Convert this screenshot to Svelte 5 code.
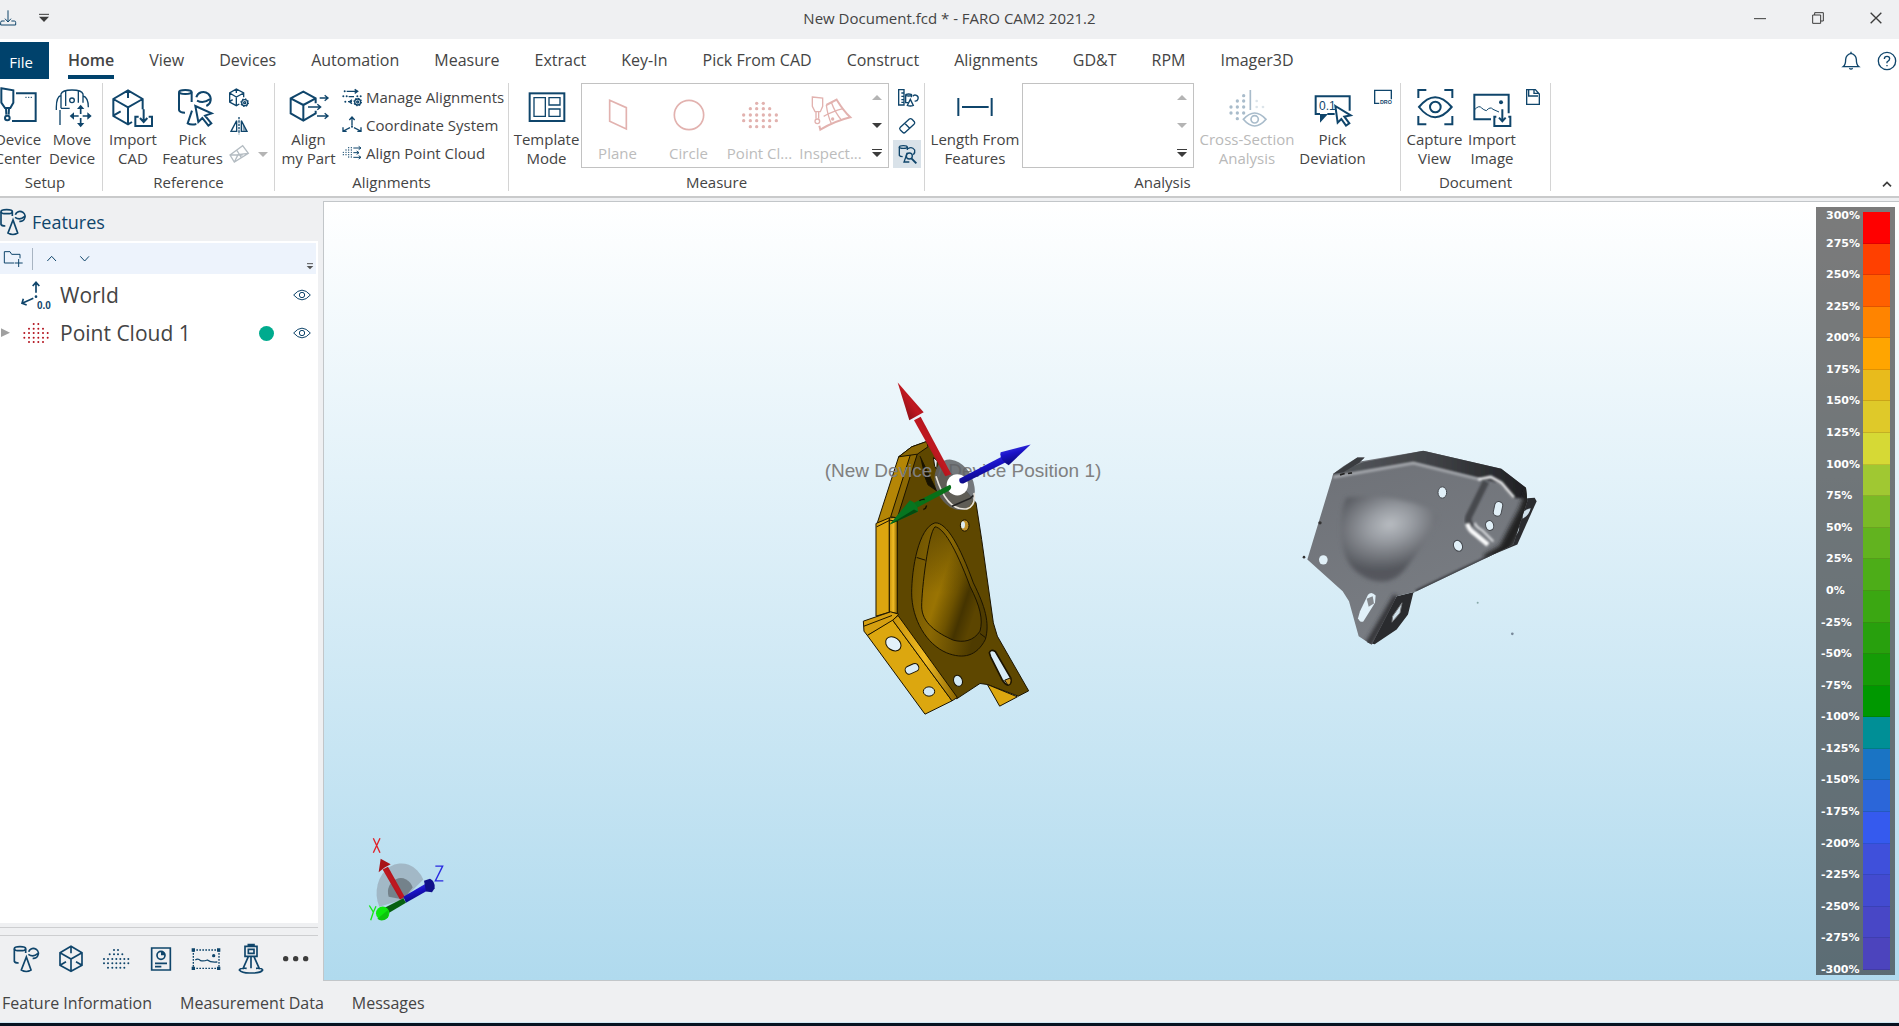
<script>
  const dots = (r, rows) =>
    rows
      .map(([y, xs]) => xs.map((x) => `<circle cx="${x}" cy="${y}" r="${r}" fill="currentColor" stroke="none"/>`).join(''))
      .join('');
  const p = (d, extra = '') => `<path d="${d}" ${extra}/>`;
  const solid = 'fill="currentColor" stroke="none"';
  const gear = (x, y) =>
    `<circle cx="${x}" cy="${y}" r="9"/><circle cx="${x}" cy="${y}" r="11" stroke-width="4" stroke-dasharray="4 4.6"/><circle cx="${x}" cy="${y}" r="3"/>`;
  const shapes = (extra = '') =>
    '<ellipse cx="20" cy="47" rx="17" ry="6"/>' +
    p('M3 47V85Q5 90 16 90M37 47V60M46 56A15 15 0 1 1 58 76M45 64Q60 74 73 62M39 72L24 111Q39 120 53 111Z') + extra;

  // Each icon: [viewBox in thirds of a pixel, stroke width, markup]
  const icons = {
    download: ['0 30 51 54', 3, p('M14 66H6Q2 66 2 70V78H47V70Q47 66 43 66H34M24 34V69M15 59L24 69L33 59')],
    customize: ['114 42 36 30', 3, p('M117 46H147') + p('M117 53H147L132 69Z', solid)],
    minimize: ['1119 33 42 36', 3, p('M1122 53H1158')],
    restore: ['1293 30 42 42', 3, p('M1298 42H1322V67H1298ZM1304 42V35H1330V60H1322')],
    close: ['1467 30 42 42', 4, p('M1472 35L1504 67M1504 35L1472 67')],
    bell: ['1380 150 66 66', 4, p('M1390 200Q1397 195 1397 178Q1398 164 1413 160Q1428 164 1429 178Q1429 195 1436 200ZM1413 160V155M1408 205Q1413 210 1418 205')],
    help: ['1488 150 66 66', 4, '<circle cx="1521" cy="183" r="26"/>' + p('M1513 177Q1513 169 1521 169Q1529 169 1529 176Q1529 181 1521 186V190M1521 195V199')],
    collapse: ['1500 537 42 30', 5, p('M1509 559L1521 547L1533 559')],
    device: ['-4 261 120 120', 6, p('M6 265L42 271V308L33 324H17L6 308ZM20 324L21 344M29 324L28 344M50 280H109V363H38') + '<circle cx="24" cy="354" r="7"/>' + p('M78 292h4m4 0h4m4 0h4', 'stroke-width="3"')],
    move: ['153 261 120 120', 4, p('M180 325V282Q184 270 213 270Q242 270 246 282V308M180 325H206M180 286Q166 290 166 322V330M177 330V375M194 273V318M232 273V308M246 288Q262 292 262 322') + '<circle cx="213" cy="301" r="7"/>' + p('M239 325V371M216 348H262', 'stroke-width="5" stroke-dasharray="17 12"') + p('M239 314L228 327H250ZM239 382L228 369H250ZM206 348L219 337V359ZM272 348L259 337V359Z', solid)],
    importCad: ['335 261 120 120', 6, p('M392 366L380 373L336 348V297L380 271L424 297V328M336 297L380 322L424 297M380 322V372M380 271V294M336 347L358 334M412 350H402V378H452V350H442M427 328V365M416 354L427 366L438 354')],
    pickFeatures: ['512 261 120 120', 6, '<ellipse cx="549" cy="276" rx="19" ry="6"/>' + p('M530 277V330Q532 338 548 338M568 277V306M582 292A22 22 0 1 1 612 318M584 302Q604 312 622 298M569 332L556 370Q566 376 582 372M579 318L628 340L608 347L627 370L618 377L600 354L588 366Z')],
    cadGear: ['681 264 60 60', 4, p('M712 312L703 317L683 306V279L703 267L725 279V292M683 279L703 291L725 279M703 291V315M703 267V279M683 305L692 299') + gear(728, 308)],
    mirror: ['681 350 60 60', 4, p('M711 353V405', 'stroke-dasharray="7 3"') + p('M704 364V396H687ZM718 364V396H735Z') + p('M722 372V394H732Z', 'fill="currentColor" fill-opacity=".5" stroke="none"')],
    meshPlane: ['681 432 60 60', 4, p('M684 465L722 437L739 460L697 486ZM684 465L722 465M704 450L718 473M697 486L708 464L739 460')],
    alignPart: ['861 261 120 120', 6, p('M941 332V340L904 362L866 340V295L904 275L941 295V310M866 295L904 315L941 295M904 315V362') + p('M953 294H978M968 286L978 294L968 302M918 321H956M946 313L956 321L946 329M945 348H978M968 340L978 348L968 356', 'stroke-width="4"')],
    manage: ['1020 264 60 60', 4, p('M1034 277H1066M1058 271L1067 277L1058 283M1040 293H1056M1038 308H1050M1050 302L1042 308L1050 314') + dots(3, [[277, [1028]], [292, [1024, 1034, 1066, 1076]], [308, [1030]]]) + gear(1067, 309)],
    coordinate: ['1020 348 60 60', 4, p('M1050 356V380M1042 363L1050 354L1058 363M1044 386L1024 396M1023 385V397H1034M1056 386L1076 396M1077 385V397H1066') + dots(3, [[383, [1050]]])],
    alignCloud: ['1020 435 60 60', 3, dots(2, [[449, [1040, 1048]], [456, [1032, 1040, 1048]], [463, [1024, 1032, 1040, 1048]], [470, [1024, 1032, 1040, 1048]], [477, [1040, 1048]]]) + p('M1054 450H1076M1070 445L1077 450L1070 455M1054 464H1070M1064 459L1071 464L1064 469M1054 478H1076M1070 473L1077 478L1070 483')],
    template: ['72 261 120 120', 6, '<rect x="80" y="280" width="104" height="83"/>' + p('M93 293H127V349H93ZM138 293H171V315H138ZM138 327H171V349H138Z', 'stroke-width="4"')],
    plane: ['288 282 120 120', 5, p('M323 298L373 320V384L323 361Z')],
    circle: ['501 282 120 120', 5, '<circle cx="561" cy="342" r="44"/>'],
    cloud: ['717 282 120 120', 5, dots(5, [[307, [767, 787]], [323, [748, 767, 787, 806]], [342, [728, 748, 767, 787, 806, 826]], [359, [728, 748, 767, 787, 806, 826]], [377, [748, 767, 787, 806]]])],
    inspect: ['928 282 120 120', 4, p('M932 288L963 291V316L956 332H940L932 316ZM943 332V353M951 332V353') + '<circle cx="947" cy="361" r="7"/>' + p('M974 312L1005 296Q1026 330 1046 349Q1000 360 956 386L953 374', 'stroke-width="6"') + p('M989 304Q1000 335 1020 358M1024 323Q990 332 966 346M974 312Q978 345 990 370') + dots(5, [[354, [993]]])],
    ruler: ['1185 264 60 60', 4, p('M1190 269H1206V315H1190ZM1198 279H1206M1198 289H1206M1198 299H1206M1198 307H1206M1211 286V308H1218M1228 286V292M1232 289A9 9 0 1 1 1238 303M1225 298L1216 316Q1225 320 1234 316Z') + '<ellipse cx="1220" cy="285" rx="9" ry="3"/>'],
    eraser: ['1185 350 60 60', 4, p('M1195 384L1222 359Q1226 356 1230 360L1237 367Q1240 371 1236 375L1210 399Q1206 403 1202 399L1195 392Q1191 388 1195 384ZM1208 372L1223 387')],
    featureSearch: ['1185 432 60 60', 4, '<ellipse cx="1204" cy="441" rx="12" ry="4"/>' + p('M1192 441V466Q1194 470 1202 470M1216 441V450M1218 446Q1230 438 1238 450Q1240 458 1234 464M1216 458L1206 486H1222') + '<circle cx="1222" cy="468" r="9"/>' + p('M1229 476L1243 490', 'stroke-width="6"')],
    length: ['99 261 120 120', 6, p('M109 294V348M209 294V348M120 321H200')],
    cross: ['915 261 120 120', 5, dots(5, [[287, [965]], [303, [946, 965]], [321, [927, 946, 965]], [339, [927, 946, 965]], [356, [946]]]) + '<g opacity=".4">' + dots(4, [[303, [1004]], [321, [1004, 1023]]]) + '</g>' + p('M985 270V330M964 358Q998 320 1032 358Q998 398 964 358Z') + '<circle cx="998" cy="358" r="11"/>'],
    deviation: ['1171 261 120 120', 6, p('M1236 342H1214M1192 342H1179V289H1281V332') + p('M1192 342H1216L1192 368Z', solid) + '<text x="1189" y="331" class="ic-num">0.1</text>' + p('M1238 318L1284 346L1265 350L1280 370L1270 377L1256 357L1245 368Z', 'fill="#fff"')],
    dro: ['1353 264 60 60', 4, p('M1372 310H1358V271H1408V298') + '<text x="1374" y="313" class="ic-dro">DRO</text>'],
    capture: ['98 261 120 120', 6, p('M108 294V270H132M186 270H210V294M210 348V373H186M132 373H108V348M110 321Q158 262 208 321Q158 382 110 321Z') + '<circle cx="159" cy="321" r="16"/>'],
    image: ['269 261 120 120', 6, p('M326 358H276V284H379V340M342 350H336V378H384V350H378M360 328V362M350 353L360 364L370 353') + p('M277 329Q290 314 298 324Q304 330 312 332Q324 318 332 328L350 336', 'stroke-width="3"') + dots(6, [[307, [356]]])],
    save: ['423 264 60 60', 4, p('M434 269H460L472 282V313H434ZM440 269V288H468M456 269V280H470')],
    features: ['0 36 78 84', 5, shapes()],
    folder: ['9 165 63 54', 3, p('M42 204H13V170H30L35 178H60V190M56 192V216M44 204H68')],
    up: ['135 174 42 30', 3, p('M142 195L155 181L168 195')],
    down: ['234 174 42 30', 3, p('M241 181L254 195L267 181')],
    overflow: ['918 201 24 24', 3, p('M921 206H939') + p('M920 213H940L930 223Z', solid)],
    world: ['60 258 96 90', 5, p('M108 266V296M98 276L108 265L118 276M100 313L68 327M70 314L66 328L80 333') + dots(4, [[308, [108]]]) + '<text x="111" y="345" class="ic-world">0.0</text>'],
    cloudRed: ['66 384 84 66', 4, dots(3, [[390, [101, 115]], [404, [87, 101, 115, 129]], [417, [73, 87, 101, 115, 129, 143]], [431, [73, 87, 101, 115, 129, 143]], [444, [87, 101, 115, 129]]])],
    eye: ['879 279 54 42', 3, p('M881 300Q906 271 931 300Q906 329 881 300Z') + '<circle cx="906" cy="300" r="8"/>'],
    expand: ['0 400 33 36', 3, p('M3 404V430L30 417Z', solid)],
    tabFeatures: ['-4 33 84 90', 5, shapes()],
    tabCad: ['171 132 84 90', 5, p('M213 139L180 158V196L213 214L246 196V158ZM180 158L213 177L246 158M213 177V214M213 139V160M180 196L198 185M246 196L228 185')],
    tabCloud: ['306 132 84 90', 5, dots(3, [[150, [342, 354]], [163, [329, 342, 354, 367]], [177, [312, 324, 337, 349, 361, 373, 385]], [190, [312, 324, 337, 349, 361, 373, 385]], [203, [324, 337, 349, 361, 373]]])],
    tabReport: ['441 132 84 90', 5, p('M455 144H511V210H455ZM465 190H501M465 200H484') + '<circle cx="483" cy="166" r="12"/>' + p('M483 166V154A12 12 0 0 1 495 166Z', solid)],
    tabImage: ['576 132 84 90', 4, p('M580 150H657M580 205H657', 'stroke-dasharray="5 4"') + p('M580 150V205M657 150V205', 'stroke-dasharray="5 4"') + p('M575 145h10v10h-10ZM651 145h10v10h-10ZM575 200h10v10h-10ZM651 200h10v10h-10Z', solid) + p('M586 180Q594 174 602 182Q612 184 622 180Q632 188 652 186') + dots(5, [[167, [641]]])],
    tabScanner: ['711 132 84 90', 5, p('M735 139H771V169H735ZM745 139V134H762V139M745 148H762V160H745ZM745 170L728 208M762 170L779 208M753 170V205M740 205Q720 204 718 210Q726 220 753 219Q782 220 788 210Q786 204 768 205')],
    tabMore: ['843 156 90 42', 5, dots(8, [[176, [857, 887, 917]]])],
  };

  const tabs = ['View', 'Devices', 'Automation', 'Measure', 'Extract', 'Key-In', 'Pick From CAD', 'Construct', 'Alignments', 'GD&T', 'RPM', 'Imager3D'];
  const gallery = [['plane', 'Plane'], ['circle', 'Circle'], ['cloud', 'Point Cl...'], ['inspect', 'Inspect...']];
  const alignList = [['manage', 'Manage Alignments'], ['coordinate', 'Coordinate System'], ['alignCloud', 'Align Point Cloud']];
  const panelTabs = [['tabFeatures', 'Features'], ['tabCad', 'CAD'], ['tabCloud', 'Point clouds'], ['tabReport', 'Reports'], ['tabImage', 'Images'], ['tabScanner', 'Devices'], ['tabMore', 'More']];
  const colors = ['#ff0000', '#ff4000', '#ff6000', '#ff8400', '#ffa500', '#e8bb1c', '#dfc929', '#d6d935', '#a0c832', '#7aba26', '#62b31f', '#4dad18', '#3ba712', '#28a00d', '#159c06', '#009800', '#008f96', '#1a74c4', '#2b66d9', '#355aee', '#3f50db', '#434bd0', '#4847c6', '#4c44bd'];
  const scale = colors.map((color, i) => ({ color, value: 300 - i * 25 }));
</script>

{#snippet icon(name)}
  {@const [box, stroke, body] = icons[name]}
  {@const size = box.split(' ').map(Number)}
  <svg class="ic" viewBox={box} width={size[2] / 3} height={size[3] / 3} stroke-width={stroke} aria-hidden="true">{@html body}</svg>
{/snippet}

{#snippet big(name, line1, line2, cls)}
  <button class="big {cls}" disabled={name === 'cross'}>
    {@render icon(name)}
    <span>{line1}<br />{line2}</span>
  </button>
{/snippet}

{#snippet small(name, label, active = false)}
  <button class="small" class:active aria-label={label}>{@render icon(name)}</button>
{/snippet}

{#snippet spinner(dim)}
  <div class="spinner">
    <button class="dim" aria-label="Scroll up"><svg viewBox="0 0 10 5" width="10" height="5"><path d="M0 5L5 0L10 5Z" /></svg></button>
    <button class:dim aria-label="Scroll down"><svg viewBox="0 0 10 5" width="10" height="5"><path d="M0 0L5 5L10 0Z" /></svg></button>
    <button aria-label="Show all"><svg viewBox="0 0 10 8" width="10" height="8"><path d="M0 0H10V1H0ZM0 3L5 8L10 3Z" /></svg></button>
  </div>
{/snippet}

<div class="app">
  <header class="titlebar">
    <div class="quick">
      <button aria-label="Save">{@render icon('download')}</button>
      <button class="dark" aria-label="Customize toolbar">{@render icon('customize')}</button>
    </div>
    <h1>New Document.fcd * - FARO CAM2 2021.2</h1>
    <div class="window">
      <button aria-label="Minimize">{@render icon('minimize')}</button>
      <button aria-label="Restore">{@render icon('restore')}</button>
      <button aria-label="Close">{@render icon('close')}</button>
    </div>
  </header>

  <nav class="tabs">
    <button class="file">File</button>
    <button class="tab current">Home</button>
    {#each tabs as tab}<button class="tab">{tab}</button>{/each}
    <div class="tools">
      <button aria-label="Notifications">{@render icon('bell')}</button>
      <button aria-label="Help">{@render icon('help')}</button>
    </div>
  </nav>

  <div class="ribbon">
    <section class="group first">
      <div class="items">
        {@render big('device', 'Device', 'Center', 'w53')}
        {@render big('move', 'Move', 'Device', 'w53')}
      </div>
      <h2>Setup</h2>
    </section>
    <section class="group">
      <div class="items">
        {@render big('importCad', 'Import', 'CAD', 'w53')}
        {@render big('pickFeatures', 'Pick', 'Features', 'w65')}
        <div class="stack wide">
          {@render small('cadGear', 'CAD settings')}
          {@render small('mirror', 'Mirror')}
          <button class="small split" aria-label="Mesh plane">
            {@render icon('meshPlane')}
            <svg viewBox="0 0 10 5" width="10" height="5"><path d="M0 0L5 5L10 0Z" fill="currentColor" /></svg>
          </button>
        </div>
      </div>
      <h2>Reference</h2>
    </section>
    <section class="group">
      <div class="items">
        {@render big('alignPart', 'Align', 'my Part', 'w61')}
        <div class="list">
          {#each alignList as [name, label]}
            <button>{@render icon(name)}<span>{label}</span></button>
          {/each}
        </div>
      </div>
      <h2>Alignments</h2>
    </section>
    <section class="group">
      <div class="items">
        {@render big('template', 'Template', 'Mode', 'w68')}
        <div class="gallery">
          {#each gallery as [name, label]}
            <button class="choice" disabled>{@render icon(name)}<span>{label}</span></button>
          {/each}
          {@render spinner(false)}
        </div>
        <div class="stack">
          {@render small('ruler', 'Measure features')}
          {@render small('eraser', 'Erase')}
          {@render small('featureSearch', 'Find features', true)}
        </div>
      </div>
      <h2>Measure</h2>
    </section>
    <section class="group">
      <div class="items">
        {@render big('length', 'Length From', 'Features', 'w94')}
        <div class="gallery empty">{@render spinner(true)}</div>
        {@render big('cross', 'Cross-Section', 'Analysis', 'w98')}
        {@render big('deviation', 'Pick', 'Deviation', 'w73')}
        <div class="stack">{@render small('dro', 'Digital readout')}</div>
      </div>
      <h2>Analysis</h2>
    </section>
    <section class="group">
      <div class="items">
        {@render big('capture', 'Capture', 'View', 'w61')}
        {@render big('image', 'Import', 'Image', 'w53')}
        <div class="stack">{@render small('save', 'Save report')}</div>
      </div>
      <h2>Document</h2>
    </section>
    <button class="collapse" aria-label="Collapse ribbon">{@render icon('collapse')}</button>
  </div>

  <main>
    <aside>
      <div class="panel-title">{@render icon('features')}<h2>Features</h2></div>
      <div class="panel-tools">
        <button aria-label="New folder">{@render icon('folder')}</button>
        <i></i>
        <button aria-label="Move up">{@render icon('up')}</button>
        <button aria-label="Move down">{@render icon('down')}</button>
        <button class="more" aria-label="Options">{@render icon('overflow')}</button>
      </div>
      <ul class="tree">
        <li>
          <span class="toggle"></span>
          <span class="glyph">{@render icon('world')}</span>
          <span class="name">World</span>
          <button aria-label="Toggle World">{@render icon('eye')}</button>
        </li>
        <li>
          <button class="toggle" aria-label="Expand">{@render icon('expand')}</button>
          <span class="glyph red">{@render icon('cloudRed')}</span>
          <span class="name">Point Cloud 1</span>
          <span class="status"></span>
          <button aria-label="Toggle Point Cloud 1">{@render icon('eye')}</button>
        </li>
      </ul>
      <div class="grip"></div>
      <div class="panel-tabs">
        {#each panelTabs as [name, label]}
          <button class:dark={name === 'tabMore'} aria-label={label}>{@render icon(name)}</button>
        {/each}
      </div>
    </aside>

    <div class="viewport">
      <svg class="scene" viewBox="324 203 1575 777" role="img" aria-label="3D scene">
        <defs>
          <linearGradient id="bowl" gradientUnits="userSpaceOnUse" x1="365" y1="640" x2="545" y2="700">
            <stop offset="0" stop-color="#8a6703" /><stop offset=".35" stop-color="#9a7403" /><stop offset=".62" stop-color="#6d5200" /><stop offset=".8" stop-color="#453400" /><stop offset="1" stop-color="#5c4500" />
          </linearGradient>
          <linearGradient id="rim" x1="0" y1="0" x2="1" y2=".4">
            <stop offset="0" stop-color="#6a5000" /><stop offset=".5" stop-color="#8a6804" /><stop offset="1" stop-color="#4e3b00" />
          </linearGradient>
          <linearGradient id="lip" gradientUnits="userSpaceOnUse" x1="0" y1="400" x2="0" y2="700">
            <stop offset="0" stop-color="#5a4500" /><stop offset="1" stop-color="#5a4500" stop-opacity="0" />
          </linearGradient>
          <linearGradient id="bar" x1="0" x2="1"><stop offset="0" stop-color="#c8930a" /><stop offset=".5" stop-color="#f0bb24" /><stop offset="1" stop-color="#8a6400" /></linearGradient>
          <linearGradient id="redArrow" x1="0" y1="1" x2="1" y2="0"><stop offset="0" stop-color="#6d0c10" /><stop offset=".5" stop-color="#c01820" /><stop offset="1" stop-color="#7d0c12" /></linearGradient>
          <linearGradient id="blueArrow" x1="0" y1="0" x2=".4" y2="1"><stop offset="0" stop-color="#4a4af0" /><stop offset=".5" stop-color="#1a12c8" /><stop offset="1" stop-color="#080870" /></linearGradient>
          <linearGradient id="steel" x1="0" y1="0" x2=".4" y2="1"><stop offset="0" stop-color="#6e7177" /><stop offset="1" stop-color="#797d83" /></linearGradient>
          <linearGradient id="edge" x1="0" x2="1"><stop offset="0" stop-color="#55585d" /><stop offset=".5" stop-color="#404246" /><stop offset="1" stop-color="#1c1d20" /></linearGradient>
          <radialGradient id="dome" gradientUnits="userSpaceOnUse" cx="330" cy="285" r="190" gradientTransform="rotate(-15 330 285) translate(0 85) scale(1 .7)">
            <stop offset="0" stop-color="#b8bcc1" /><stop offset=".35" stop-color="#999da3" /><stop offset=".7" stop-color="#74777d" /><stop offset="1" stop-color="#54575d" />
          </radialGradient>
          <filter id="soft" x="-20%" y="-20%" width="140%" height="140%"><feGaussianBlur stdDeviation="7" /></filter>
          <filter id="soft2" x="-20%" y="-20%" width="140%" height="140%"><feGaussianBlur stdDeviation="3" /></filter>
          <clipPath id="plate"><path d="M160 133L250 98L430 64L664 118L738 175L742 215L700 345L640 375L408 486L350 500L275 646L236 620L207 515L188 485L82 390Z" /></clipPath>
        </defs>

        <g transform="translate(800 360) scale(.33333)" stroke="#1a1300" stroke-width="3" stroke-linejoin="round">
          <path d="M296 292L335 262L380 246L410 290L528 430L545 540L580 790L592 830L686 994L655 1010L562 975L540 972L470 1018L290 790L290 480Z" fill="#5e4700" />
          <path d="M296 292L335 275L352 282L275 478L232 490Z" fill="#b58606" />
          <path d="M332 283L352 283L292 475L272 472Z" fill="#8c6802" />
          <path d="M296 292L335 262L380 246L384 262L352 284Z" fill="#8a6805" />
          <path d="M228 492L268 475V758L228 770Z" fill="#dba50f" />
          <path d="M268 475L292 474V762L268 758Z" fill="url(#bar)" />
          <path d="M190 785L272 757L296 764L272 790L202 828L192 815Z" fill="#d59f10" />
          <path d="M202 828L278 782L456 1024L375 1064Z" fill="#dca70f" />
          <path d="M278 782L294 768L472 1014L456 1024Z" fill="url(#bar)" />
          <path d="M192 800L276 768M230 502L270 482L292 486" fill="none" />
          <path d="M562 975L652 1012L599 1040Z" fill="#dca70f" />
          <g transform="rotate(35 280 853)"><ellipse cx="280" cy="853" rx="25" ry="19" fill="#e3f1f9" /></g>
          <rect x="315" y="916" width="42" height="24" rx="11" transform="rotate(-24 336 928)" fill="#d8ecf7" />
          <ellipse cx="387" cy="996" rx="17" ry="14" fill="#d2e9f5" />
          <ellipse cx="474" cy="964" rx="13" ry="17" transform="rotate(-20 474 964)" fill="#d2e9f5" />
          <ellipse cx="494" cy="498" rx="13" ry="17" fill="#c0922c" />
          <ellipse cx="489" cy="496" rx="6" ry="11" fill="#dcebf4" stroke="none" />
          <path d="M568 880Q572 868 586 876L632 955Q636 975 624 977Q614 974 606 960L572 892Z" fill="#d8ecf7" stroke-width="5" />
          <path d="M614 962L632 955Q636 975 624 977Z" fill="#c4952a" />
          <path d="M405 490C440 488 480 560 520 670C555 740 570 790 556 840C530 890 490 900 440 880C380 855 335 780 335 700C335 630 355 505 405 490Z" fill="url(#rim)" />
          <path d="M405 502C430 505 465 560 510 680C540 740 550 780 540 815C520 845 490 850 460 842C410 820 365 790 365 740C365 690 385 520 405 502Z" fill="url(#bowl)" stroke="none" />
          <path d="M405 502C430 505 465 560 510 680C540 740 550 780 540 815C520 845 490 850 460 842C410 820 365 790 365 740C365 690 385 520 405 502Z" fill="url(#lip)" />
          <path d="M350 594L376 602M540 822L556 834" fill="none" />
          <path d="M400 294L412 304L410 330L404 320Z" fill="#e6eef2" />
          <path d="M360 290L410 394L384 376L372 345" fill="#171200" />
        </g>

        <text x="963" y="477" text-anchor="middle" class="position">(New Device / Device Position 1)</text>

        <g transform="translate(800 360) scale(.33333)">
          <ellipse cx="464" cy="376" rx="56" ry="79" transform="rotate(-24 464 376)" fill="#5f6165" fill-opacity=".85" />
          <path d="M408 350Q440 455 500 448Q528 440 522 400" fill="none" stroke="#e8e4dc" stroke-width="5" />
          <path d="M456 440L512 416L520 408" fill="none" stroke="#222" stroke-width="5" />
          <circle cx="472" cy="376" r="32" fill="#fff" />
          <path d="M342 182L362 172L454 344L436 350Z" fill="url(#redArrow)" />
          <path d="M293 69L371 158L328 182Z" fill="url(#redArrow)" />
          <path d="M478 358L612 288L622 306L490 372Q476 374 478 358Z" fill="url(#blueArrow)" />
          <path d="M692 255L602 278Q596 300 626 317Z" fill="url(#blueArrow)" />
          <path d="M450 376Q458 384 448 393L352 444L342 430Z" fill="#087018" />
          <path d="M268 496L330 422Q354 432 354 456Z" fill="#077520" />
          <path d="M268 496L342 450L354 456Z" fill="#034a10" />
          <path d="M358 424Q366 418 374 420M370 450Q378 448 380 438" fill="none" stroke="#161200" stroke-width="4" />
        </g>

        <g transform="translate(1280 430) scale(.33333)">
          <path d="M640 375L742 206L764 205L770 215L712 345Z" fill="#2b2c2f" />
          <path d="M728 262Q726 240 752 236Q748 256 728 268ZM692 322Q696 298 718 294Q716 318 692 328Z" fill="#cfe0ea" />
          <path d="M408 486L400 490L384 555L350 600L284 644L262 640L350 500Z" fill="#2a2b2e" />
          <path d="M338 560L366 520L360 550L336 578Z" fill="#cfe0ea" stroke="#77797c" stroke-width="3" />
          <path d="M160 133L190 110L232 84L254 84L240 96L430 64L664 118L738 175L742 215L700 345L640 375L408 486L350 500L275 646L236 620L207 515L188 485L82 390Z" fill="url(#steel)" />
          <g clip-path="url(#plate)">
            <path d="M150 140L400 98L610 150L660 160L700 205L770 210L720 110L430 50L150 110Z" fill="url(#edge)" filter="url(#soft2)" />
            <path d="M200 205Q330 190 440 235Q480 250 470 275Q430 350 370 425Q330 470 270 450Q190 420 184 320Q180 240 200 205Z" fill="url(#dome)" filter="url(#soft)" />
            <path d="M160 143L400 101L600 150" fill="none" stroke="#a5a8ad" stroke-width="8" filter="url(#soft2)" />
            <path d="M595 150L632 142L664 160L702 204" fill="none" stroke="#f2f3f5" stroke-width="8" filter="url(#soft2)" />
            <path d="M618 156L566 262Q560 280 576 292" fill="none" stroke="#46494e" stroke-width="20" filter="url(#soft2)" />
            <path d="M562 282Q566 300 584 312L624 346" fill="none" stroke="#fafbfc" stroke-width="14" filter="url(#soft2)" />
            <path d="M584 280Q590 294 606 302L640 336" fill="none" stroke="#e4e6e9" stroke-width="6" filter="url(#soft2)" />
            <path d="M756 180L736 240L672 362L620 392" fill="none" stroke="#202124" stroke-width="36" filter="url(#soft)" />
            <path d="M350 500L262 650" fill="none" stroke="#303236" stroke-width="20" filter="url(#soft)" />
            <path d="M640 376L408 486" fill="none" stroke="#3b3d42" stroke-width="10" filter="url(#soft2)" />
          </g>
          <path d="M160 133L232 84L254 84L238 100L190 128Z" fill="#3a3c40" />
          <g fill="#e1f0f8" stroke="#44474c" stroke-width="3">
            <ellipse cx="487" cy="189" rx="13" ry="17" /><ellipse cx="534" cy="349" rx="13" ry="17" transform="rotate(-25 534 349)" />
            <ellipse cx="629" cy="288" rx="12" ry="15" transform="rotate(-15 629 288)" /><ellipse cx="130" cy="391" rx="13" ry="14" stroke="none" />
            <rect x="642" y="216" width="24" height="44" rx="11" transform="rotate(12 654 238)" />
            <path d="M264 496Q274 484 287 498L285 520L250 576Q240 580 234 566L240 545Z" stroke="none" />
          </g>
          <path d="M260 508L278 500L282 522L266 532Z" fill="#85898e" />
          <circle cx="72" cy="383" r="4" fill="#333" /><circle cx="120" cy="280" r="5" fill="#333" /><path d="M180 136l14-4m10 0l12-2" stroke="#222" stroke-width="5" />
          <circle cx="593" cy="520" r="3" fill="#8aa" /><circle cx="697" cy="613" r="4" fill="#789" />
        </g>

        <g transform="translate(340 810) scale(.33333)">
          <path d="M190 270L118 292A70 84 0 1 1 250 210Z" fill="#9aabb8" fill-opacity=".75" />
          <path d="M190 270L146 262A38 42 0 0 1 218 234Z" fill="#6c7880" fill-opacity=".85" />
          <path d="M128 180L144 172L194 262L180 270Z" fill="url(#redArrow)" />
          <path d="M122 148L152 164L134 174L116 188Z" fill="#a81418" />
          <path d="M190 262L258 222L268 240L198 280Z" fill="url(#blueArrow)" />
          <path d="M252 214L270 208Q286 216 284 236L276 248L258 246Z" fill="#10108a" />
          <path d="M190 266L128 298L140 314L198 280Z" fill="#066010" />
          <circle cx="128" cy="311" r="20" fill="#0ee80e" /><path d="M112 328Q126 340 144 324L146 300Z" fill="#0cc40c" />
          <g fill="none" stroke-width="4"><path d="M100 86L120 130M120 86L100 130" stroke="#e02028" /><path d="M286 170H308L286 214H310" stroke="#2828e0" /><path d="M88 288L100 308L108 290M100 308L92 332" stroke="#18e818" /></g>
        </g>
      </svg>

      <ol class="legend">
        {#each scale as step}
          <li><span class:neg={step.value < 0}>{step.value}%</span><b style:background={step.color}></b></li>
        {/each}
        <li class="end"><span class="neg">-300%</span></li>
      </ol>
    </div>
  </main>

  <footer>
    <button>Feature Information</button>
    <button>Measurement Data</button>
    <button>Messages</button>
  </footer>
</div>

<style>
  :global(body) { margin: 0; }
  .app {
    display: flex;
    flex-direction: column;
    height: 100vh;
    box-sizing: border-box;
    overflow: hidden;
    border-bottom: 3px solid #061220;
    background: #eff0f2;
    color: #444;
    font: 15px/19px "Open Sans", "Noto Sans", sans-serif;
  }
  button { padding: 0; border: 0; background: none; color: inherit; font: inherit; white-space: nowrap; }
  h1, h2, ul, ol { margin: 0; padding: 0; font: inherit; list-style: none; }
  .ic { display: block; flex: none; overflow: visible; fill: none; stroke: currentColor; color: #0f456b; }
  .dark .ic, .window .ic, .collapse .ic { color: #3c3c3c; }
  .ic :global(text) { fill: currentColor; stroke: none; font-family: "Liberation Sans", sans-serif; font-weight: bold; }
  .ic :global(.ic-num) { font-size: 36px; font-weight: normal; }
  .ic :global(.ic-dro) { font-size: 16px; }
  .ic :global(.ic-world) { font-size: 30px; }

  .titlebar { display: grid; grid-template-columns: 1fr auto 1fr; align-items: center; height: 39px; padding-bottom: 3px; box-sizing: border-box; flex: none; }
  .quick { display: flex; align-items: center; gap: 21px; }
  .titlebar h1 { font-size: 15px; }
  .window { display: flex; justify-content: flex-end; gap: 12px; }
  .window button { display: grid; place-items: center; width: 46px; height: 34px; }

  .tabs { display: flex; align-items: stretch; height: 40px; flex: none; background: #fff; font-size: 16px; }
  .file { width: 49px; margin-top: 3px; padding: 3px 16px 0 0; box-sizing: border-box; background: #00426c; color: #fff; text-align: right; font-size: 15px; }
  .tab { margin-left: 35px; border-top: 6px solid transparent; border-bottom: 4px solid transparent; }
  .tab.current { margin-left: 19px; border-bottom-color: #00426c; font-weight: 600; }
  .tools { display: flex; gap: 12px; margin-left: auto; padding-top: 4px; }
  .tools button { display: grid; place-items: center; width: 24px; }

  .ribbon { display: flex; flex: none; padding: 4px 0 5px; border-bottom: 2px solid #c9cacb; background: #fff; }
  .group { display: flex; flex-direction: column; flex: none; height: 108px; padding: 0 3px; border-right: 1px solid #d4d4d4; }
  .group.first { margin-left: -12px; }
  .items { display: flex; height: 86px; }
  .group h2 { padding-top: 5px; text-align: center; font-size: 15px; }
  .big { display: flex; flex-direction: column; align-items: center; gap: 3px; padding-top: 4px; font-size: 15px; }
  .big:disabled { color: #b9b9b9; }
  .big:disabled .ic { color: #a9bccb; }
  .w53 { width: 54px; }
  .w61 { width: 61px; }
  .w65 { width: 65px; }
  .w68 { width: 69px; }
  .w73 { width: 73px; }
  .w94 { width: 94px; }
  .w98 { width: 98px; margin-left: 4px; }
  .stack { display: flex; flex-direction: column; width: 28px; padding-top: 1px; }
  .stack.wide { width: 46px; }
  .small { display: flex; align-items: center; justify-content: center; width: 28px; height: 28px; }
  .small.active { background: #d9e2e9; }
  .split { justify-content: flex-start; width: 46px; gap: 9px; padding-left: 4px; color: #b4b4b4; }
  .split .ic { color: #b4bcc2; }
  .list { display: flex; flex-direction: column; width: 163px; padding-left: 3px; }
  .list button { display: flex; align-items: center; gap: 4px; height: 28px; }
  .gallery { display: flex; height: 85px; margin-right: 4px; box-sizing: border-box; border: 1px solid #c2c2c2; }
  .gallery.empty { width: 172px; margin-right: 0; justify-content: flex-end; }
  .choice { display: flex; flex-direction: column; align-items: center; gap: 9px; width: 71px; padding-top: 11px; color: #bcbcbc; }
  .choice .ic { color: #e2b2af; }
  .spinner { display: grid; width: 22px; grid-template-rows: 1fr 1fr 1fr; }
  .spinner button { display: grid; place-items: center; }
  .spinner svg { fill: #3c3c3c; }
  .spinner .dim svg { fill: #b4b4b4; }
  .collapse { align-self: flex-end; margin: 0 5px 2px auto; }

  main { display: flex; flex: 1; min-height: 0; gap: 5px; padding-top: 3px; }
  aside { display: flex; flex-direction: column; flex: none; width: 318px; }
  .panel-title { display: flex; align-items: center; gap: 6px; height: 38px; padding-top: 2px; border-bottom: 2px solid #fff; color: #0f456b; }
  .panel-title h2 { font-size: 18px; line-height: 24px; }
  .panel-tools { display: flex; align-items: center; height: 31px; padding-left: 3px; border-right: 2px solid #fff; background: #edf3fc; }
  .panel-tools i { width: 1px; height: 22px; margin: 0 12px 0 8px; background: #a8b4c2; }
  .panel-tools button + button { margin-left: 19px; }
  .panel-tools .more { margin: 14px 2px 0 auto; }
  .more .ic { color: #555; }
  .tree { flex: 1; padding-top: 2px; background: #fff; font-size: 21px; line-height: 28px; }
  .tree li { display: flex; align-items: center; height: 38px; padding-right: 7px; }
  .toggle { width: 20px; flex: none; }
  .toggle .ic { color: #a0a0a0; }
  .glyph { display: flex; justify-content: center; width: 32px; margin-right: 8px; }
  .red .ic { color: #b3121d; }
  .name { flex: 1; }
  .status { width: 15px; height: 15px; margin-right: 19px; border-radius: 50%; background: #00ab8e; }
  .grip { height: 7px; margin-top: 4px; border: solid #cdced0; border-width: 1px 0; }
  .panel-tabs { display: flex; align-items: center; height: 45px; padding-left: 4px; }
  .panel-tabs button { display: flex; justify-content: center; width: 45px; }

  .viewport { display: flex; flex: 1; position: relative; min-width: 0; border: solid #c2c6c9; border-width: 1px 0 1px 1px; background: linear-gradient(#fff, #b0daee); }
  .scene { position: absolute; inset: 0; width: 100%; height: 100%; }
  .position { fill: #808080; font: 19px "Liberation Sans", sans-serif; }
  .legend { display: flex; flex-direction: column; width: 79px; box-sizing: border-box; margin: 5px 4px 5px auto; padding: 5px 5px 5px 10px; background: rgba(35, 35, 35, .6); color: #fff; font: bold 11px/14px "DejaVu Sans", sans-serif; position: relative; overflow: hidden; }
  .legend li { display: flex; flex: 1; justify-content: space-between; }
  .legend li.end { flex: none; height: 0; }
  .legend span { margin-top: -7px; }
  .legend li:first-child span { margin-top: -3px; }
  .legend span.neg { margin-left: -5px; }
  .legend b { width: 27px; box-sizing: border-box; border-bottom: 1px solid rgba(0, 0, 0, .12); }

  footer { display: flex; align-items: center; flex: none; gap: 28px; height: 42px; padding: 4px 0 0 2px; font-size: 16px; border-bottom: 1px solid #cfe6f3; box-sizing: border-box; }
</style>
